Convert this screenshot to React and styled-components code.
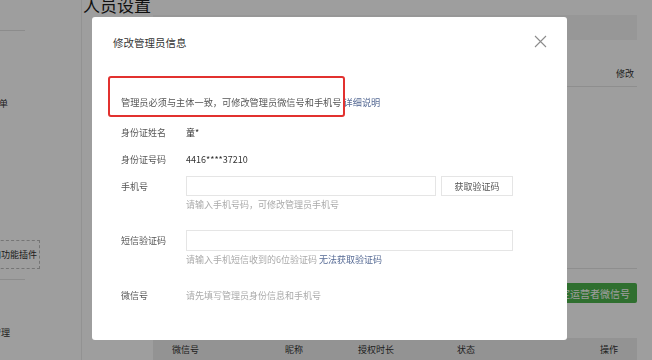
import React from 'react';
import styled, { createGlobalStyle } from 'styled-components';

const GlobalStyle = createGlobalStyle`
  html, body {
    margin: 0;
    padding: 0;
    background: #fff;
    font-family: "Noto Sans CJK SC", "Noto Sans", sans-serif;
    overflow: hidden;
  }
`;

const Page = styled.div`
  display: flex;
  width: 652px;
  height: 360px;
  overflow: hidden;
`;

const Sidebar = styled.div`
  width: 81px;
  flex-shrink: 0;
  border-right: 1px solid #ececec;
  display: flex;
  flex-direction: column;
  font-size: 9px;
  color: #333;
  overflow: hidden;
`;

const SideLine = styled.div`
  width: 25px;
  height: 1px;
  background: #e2e2e2;
  margin-top: ${p => p.$top}px;
`;

const SideItem = styled.div`
  margin-top: ${p => p.$top}px;
  margin-left: ${p => p.$left}px;
  height: 14px;
  line-height: 14px;
  white-space: nowrap;
`;

const PluginBox = styled.div`
  margin-top: ${p => p.$top}px;
  margin-left: -20px;
  width: 56px;
  height: 27px;
  border: 1px dashed #bdbdbd;
  display: flex;
  align-items: center;
  padding-left: 2px;
  white-space: nowrap;
`;

const Main = styled.div`
  flex: 1;
  display: flex;
  flex-direction: column;
  padding-right: 15px;
`;

const PageTitle = styled.h1`
  margin: -5px 0 0 0;
  padding-left: 1px;
  font-size: 17px;
  line-height: 20px;
  font-weight: 400;
  color: #1a1a1a;
`;

const Table = styled.div`
  margin-left: 71px;
  display: flex;
  flex-direction: column;
`;

const HeadBand = styled.div`
  height: 25px;
  background: #f4f4f4;
`;

const Row = styled.div`
  height: ${p => p.$h}px;
  border-bottom: 1px solid #e6e6e6;
  display: flex;
  align-items: flex-end;
  justify-content: flex-end;
  padding: 0 3px 6px 0;
  box-sizing: border-box;
  font-size: 9px;
  color: #333;
`;

const ActionRow = styled.div`
  margin-top: 14px;
  display: flex;
  justify-content: flex-end;
`;

const GreenButton = styled.button`
  height: 20px;
  padding: 0 7px;
  border: none;
  border-radius: 2px;
  background: #4cb44c;
  color: #fff;
  font-family: inherit;
  font-size: 10px;
`;

const GridHead = styled.div`
  margin-top: 35px;
  height: 22px;
  background: #ededed;
  display: grid;
  grid-template-columns: 113px 73px 99px 143px 1fr;
  align-items: center;
  padding-left: 19px;
  font-size: 9px;
  color: #333;
`;

const Overlay = styled.div`
  position: fixed;
  inset: 0;
  background: rgba(0, 0, 0, 0.38);
  padding: 17px 0 0 92px;
`;

const Modal = styled.div`
  width: 475px;
  height: 323px;
  background: #fff;
  border-radius: 3px;
  display: flex;
  flex-direction: column;
`;

const ModalHeader = styled.div`
  height: 50px;
  display: flex;
  align-items: center;
  justify-content: space-between;
  padding: 0 20px 0 21px;
`;

const ModalTitle = styled.div`
  font-size: 10.5px;
  color: #353535;
`;

const CloseButton = styled.div`
  width: 13px;
  height: 13px;
  margin-bottom: 2px;
  display: flex;
`;

const Body = styled.div`
  padding-left: 29px;
  display: flex;
  flex-direction: column;
`;

const Notice = styled.div`
  position: relative;
  margin-top: 25px;
  height: 20px;
  line-height: 20px;
  font-size: 9.2px;
  color: #555;
  white-space: nowrap;
`;

const RedMark = styled.div`
  position: absolute;
  left: -13px;
  top: -16px;
  width: 237px;
  height: 41px;
  border: 2px solid #e2312f;
  border-radius: 3px;
  box-sizing: border-box;
`;

const Link = styled.span`
  color: #576b95;
`;

const FormRow = styled.div`
  margin-top: ${p => p.$top}px;
  height: ${p => p.$h || 20}px;
  display: flex;
  align-items: center;
  font-size: 9px;
`;

const Label = styled.div`
  width: 65px;
  color: #555;
`;

const Value = styled.div`
  color: ${p => (p.$muted ? '#aaa' : '#333')};
`;

const Input = styled.div`
  width: ${p => p.$w}px;
  height: 100%;
  border: 1px solid #e5e5e5;
  box-sizing: border-box;
`;

const CodeButton = styled.div`
  margin-left: 5px;
  width: 72px;
  height: 100%;
  border: 1px solid #e5e5e5;
  box-sizing: border-box;
  display: flex;
  align-items: center;
  justify-content: center;
  color: #555;
`;

const Hint = styled.div`
  margin-top: 2px;
  height: 14px;
  line-height: 14px;
  padding-left: 65px;
  font-size: 9px;
  color: #aaa;
`;

export default function App() {
  return (
    <>
      <GlobalStyle />
      <Page>
        <Sidebar>
          <SideLine $top={30} />
          <SideItem $top={66} $left={-37}>自定义菜单</SideItem>
          <PluginBox $top={129}>添加功能插件</PluginBox>
          <SideLine $top={10} />
          <SideItem $top={46} $left={-26}>用户管理</SideItem>
        </Sidebar>
        <Main>
          <PageTitle>人员设置</PageTitle>
          <Table>
            <HeadBand />
            <Row $h={47}>修改</Row>
            <Row $h={182} />
            <ActionRow>
              <GreenButton>绑定运营者微信号</GreenButton>
            </ActionRow>
          </Table>
          <Table>
            <GridHead>
              <span>微信号</span>
              <span>昵称</span>
              <span>授权时长</span>
              <span>状态</span>
              <span>操作</span>
            </GridHead>
          </Table>
        </Main>
      </Page>
      <Overlay>
        <Modal>
          <ModalHeader>
            <ModalTitle>修改管理员信息</ModalTitle>
            <CloseButton>
              <svg width="13" height="13" viewBox="0 0 13 13">
                <path d="M1 1 L12 12 M12 1 L1 12" stroke="#8c8c8c" strokeWidth="1.1" fill="none" />
              </svg>
            </CloseButton>
          </ModalHeader>
          <Body>
            <Notice>
              管理员必须与主体一致，可修改管理员微信号和手机号 <Link>详细说明</Link>
              <RedMark />
            </Notice>
            <FormRow $top={10}>
              <Label>身份证姓名</Label>
              <Value>童*</Value>
            </FormRow>
            <FormRow $top={7}>
              <Label>身份证号码</Label>
              <Value>4416****37210</Value>
            </FormRow>
            <FormRow $top={7}>
              <Label>手机号</Label>
              <Input $w={250} />
              <CodeButton>获取验证码</CodeButton>
            </FormRow>
            <Hint>请输入手机号码，可修改管理员手机号</Hint>
            <FormRow $top={18} $h={21}>
              <Label>短信验证码</Label>
              <Input $w={327} />
            </FormRow>
            <Hint>请输入手机短信收到的6位验证码 <Link>无法获取验证码</Link></Hint>
            <FormRow $top={18}>
              <Label>微信号</Label>
              <Value $muted>请先填写管理员身份信息和手机号</Value>
            </FormRow>
          </Body>
        </Modal>
      </Overlay>
    </>
  );
}
